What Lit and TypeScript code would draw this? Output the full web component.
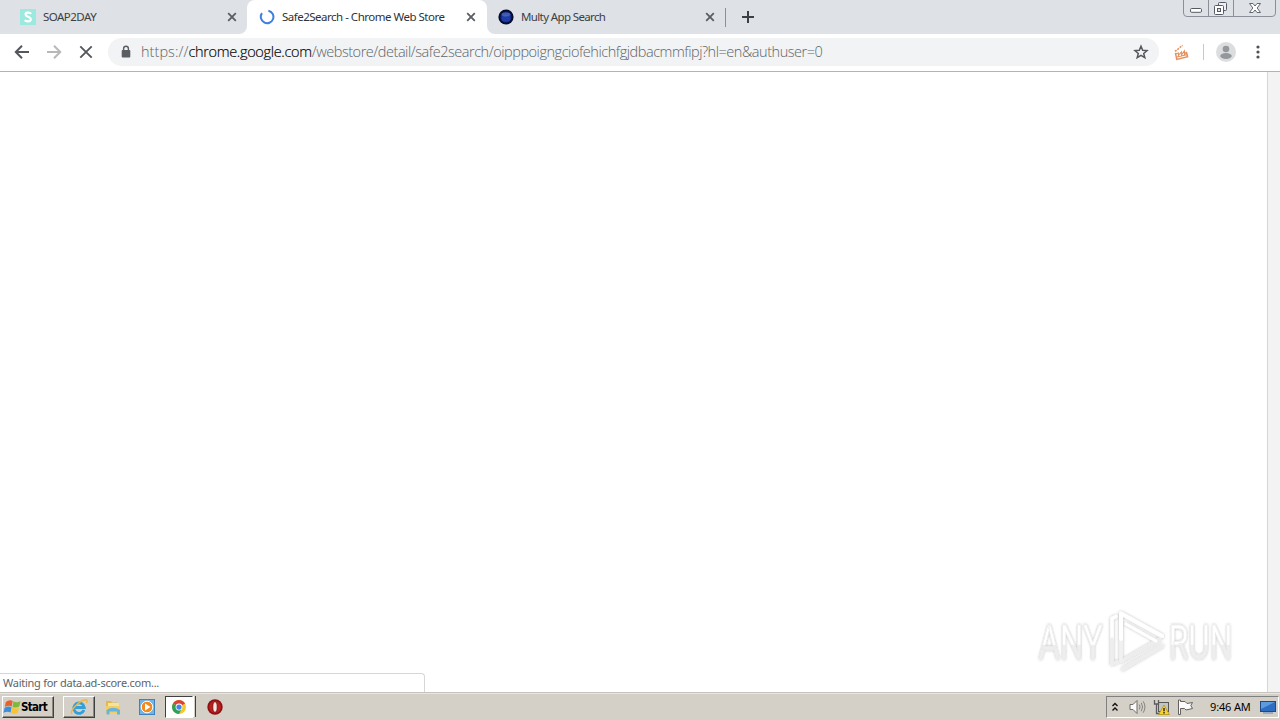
import { LitElement, html, css, svg } from 'lit';
import { customElement } from 'lit/decorators.js';

const closeGlyph = html`<svg class="close" width="10" height="10" viewBox="0 0 10 10">
  <path d="M1.2 1.2 L8.8 8.8 M8.8 1.2 L1.2 8.8" stroke="#5a5d61" stroke-width="1.8" fill="none" />
</svg>`;

@customElement('tab-strip')
class TabStrip extends LitElement {
  static styles = css`
    :host { display: flex; height: 34px; background: #dee1e6; font: 11.5px "Noto Sans", "Open Sans", sans-serif; color: #3c4043; position: relative; }
    .tab { display: flex; align-items: center; box-sizing: border-box; height: 34px; padding-left: 20px; }
    .first { width: 247px; padding-right: 10px; border-bottom-right-radius: 8px; background: #dee1e6; }
    .active { width: 240px; padding-left: 12px; padding-right: 11px; background: #fff; color: #303236; border-radius: 8px 8px 0 0; }
    .top { display: flex; background: linear-gradient(#dee1e6 50%, #fff 50%); }
    .third { width: 239px; padding-left: 11px; padding-right: 11px; background: #dee1e6; border-bottom-left-radius: 8px; }
    .label { flex: 1; white-space: nowrap; margin-left: 7px; line-height: 16px; }
    .soap { letter-spacing: -0.52px; }
    .safe { letter-spacing: -0.5px; }
    .multy { letter-spacing: -0.63px; }
    .icon { flex: none; display: block; }
    .close { flex: none; display: block; }
    .divider { width: 1px; height: 19px; margin: 8px 0 0 -1px; background: #8c9096; }
    .plus { margin: 10px 0 0 15px; }
    .window { position: absolute; right: 3px; top: 0; display: block; }
  `;
  render() {
    return html`
      <div class="top">
      <div class="tab first">
        <svg class="icon" width="16" height="16" viewBox="0 0 16 16">
          <rect width="16" height="16" fill="#9ce9e0" />
          <path d="M11 4.8 C10 3.3 5.5 3 5.5 5.6 C5.5 8.2 10.8 7.2 10.8 10.2 C10.8 13 6 13 4.8 11.2" fill="none" stroke="#fff" stroke-width="2.2" />
        </svg>
        <span class="label soap">SOAP2DAY</span>${closeGlyph}
      </div>
      <div class="tab active">
        <svg class="icon" width="16" height="16" viewBox="0 0 16 16">
          <path d="M9.4 1.7 A6.3 6.3 0 1 1 3 4.2" fill="none" stroke="#3d7fdc" stroke-width="2" />
        </svg>
        <span class="label safe">Safe2Search - Chrome Web Store</span>${closeGlyph}
      </div>
      <div class="tab third">
        <svg class="icon" width="16" height="16" viewBox="0 0 16 16">
          <circle cx="8" cy="8" r="7.6" fill="#060b2c" /><circle cx="8" cy="8" r="5.6" fill="#12267e" /><ellipse cx="8" cy="9.4" rx="4.6" ry="3.4" fill="#1d3ca8" />
          <ellipse cx="8" cy="5.4" rx="4.4" ry="2" fill="#5f7cd0" opacity=".6" />
        </svg>
        <span class="label multy">Multy App Search</span>${closeGlyph}
      </div>
      </div>
      <div class="divider"></div>
      <svg class="plus" width="14" height="14" viewBox="0 0 14 14"><path d="M7 1 V13 M1 7 H13" stroke="#3c4043" stroke-width="2" /></svg>
      <svg class="window" width="94" height="18" viewBox="0 0 94 18">
        <path d="M.5 0 V13 Q.5 16.5 4 16.5 H89 Q92.5 16.5 92.5 13 V0 M25.5 0 V16 M50.5 0 V16" fill="none" stroke="#8b8f98" />
        <rect x="7.5" y="8.5" width="11" height="3.8" rx="1.2" fill="#fff" stroke="#555a66" />
        <rect x="35.5" y="2.5" width="8" height="8" rx="1" fill="#eef0f3" stroke="#555a66" />
        <rect x="31.5" y="5.5" width="9" height="9" rx="1" fill="#fff" stroke="#555a66" />
        <rect x="34.5" y="8.5" width="3" height="3" fill="#dee1e6" stroke="#555a66" />
        <path d="M66.5 3.5 H70 L72 6 L74 3.5 H77.5 L74.2 8 L77.5 12.5 H74 L72 10 L70 12.5 H66.5 L69.8 8 Z" fill="#fff" stroke="#636773" />
      </svg>`;
  }
}

@customElement('address-row')
class AddressRow extends LitElement {
  static styles = css`
    :host { display: flex; align-items: center; box-sizing: border-box; height: 38px; padding: 0 12px 1px; background: #fff; border-bottom: 1px solid #b2b3b4; }
    svg { display: block; flex: none; }
    .nav { display: flex; gap: 12px; width: 96px; }
    .pill { display: flex; align-items: center; box-sizing: border-box; width: 1051px; height: 28px; border-radius: 14px; background: #f1f3f4; padding: 0 10px 0 11px; }
    .url { flex: 1; margin-left: 8px; white-space: nowrap; font: 300 14.5px "Open Sans", "Noto Sans", sans-serif; color: #5f6469; line-height: 20px; }
    .s { letter-spacing: 0.05px; }
    .host { color: #000; letter-spacing: -0.32px; -webkit-text-stroke: 0.15px #000; }
    .path { letter-spacing: -0.46px; }
    .ext { margin-left: 14px; }
    .line { width: 1px; height: 16px; margin-left: 13px; background: #c6c8ca; }
    .user { margin-left: 12px; }
    .dots { margin-left: 20px; }
  `;
  render() {
    return html`
      <div class="nav">
        <svg width="20" height="20" viewBox="0 0 20 20"><path d="M17 10 H4 M10 3.8 L3.8 10 L10 16.2" fill="none" stroke="#54575b" stroke-width="2" /></svg>
        <svg width="20" height="20" viewBox="0 0 20 20"><path d="M3 10 H16 M10 3.8 L16.2 10 L10 16.2" fill="none" stroke="#b6b8ba" stroke-width="2" /></svg>
        <svg width="20" height="20" viewBox="0 0 20 20"><path d="M4.3 4.3 L15.7 15.7 M15.7 4.3 L4.3 15.7" fill="none" stroke="#54575b" stroke-width="1.9" /></svg>
      </div>
      <div class="pill">
        <svg width="14" height="14" viewBox="0 0 14 14"><rect x="2.7" y="5" width="8.6" height="7.6" rx="1" fill="#5a5d61" /><path d="M4.6 5.5 V3.7 a2.4 2.4 0 0 1 4.8 0 V5.5" fill="none" stroke="#5a5d61" stroke-width="1.4" /></svg>
        <span class="url"><span class="s">https://</span><span class="host">chrome.google.com</span><span class="path">/webstore/detail/safe2search/oipppoigngciofehichfgjdbacmmfipj?hl=en&amp;authuser=0</span></span>
        <svg width="16" height="16" viewBox="0 0 16 16"><path d="M8 2.2 L9.7 6.2 L14 6.5 L10.7 9.4 L11.8 13.6 L8 11.3 L4.2 13.6 L5.3 9.4 L2 6.5 L6.3 6.2 Z" fill="none" stroke="#54575b" stroke-width="1.5" /></svg>
      </div>
      <svg class="ext" width="17" height="17" viewBox="0 0 17 17"><g fill="none" stroke="#e5915f"><path d="M2.4 8.8 L3.8 15.4 L14.6 12.8 L13.4 8" stroke-width="1.5" /><path d="M3 9.8 L5.4 9 V11.6 L8.4 8 V10.8 L11.4 6.8 V10 L13.6 8 M4 13 L14 10.6" stroke-width="1.1" /><path d="M2 7.4 L9.6 1.4" stroke-width="1.6" stroke-dasharray="2 1" /></g></svg>
      <div class="line"></div>
      <svg class="user" width="20" height="20" viewBox="0 0 20 20"><circle cx="10" cy="10" r="10" fill="#dcdddf" /><circle cx="10" cy="7" r="3.3" fill="#94979b" /><ellipse cx="10" cy="14" rx="5.8" ry="2.9" fill="#94979b" /></svg>
      <svg class="dots" width="4" height="16" viewBox="0 0 4 16"><g fill="#4e5155"><circle cx="2" cy="3" r="1.6" /><circle cx="2" cy="8" r="1.6" /><circle cx="2" cy="13" r="1.6" /></g></svg>`;
  }
}

@customElement('page-view')
class PageView extends LitElement {
  static styles = css`
    :host { display: flex; position: relative; flex: 1; background: #fff; min-height: 0; }
    .page { flex: 1; }
    .scroll { width: 12px; border-left: 1px solid #d6d6d6; background: #f3f3f3; }
    .status { position: absolute; left: 0; bottom: 0; box-sizing: border-box; width: 425px; height: 19px; padding-left: 3px; border: 1px solid #d6d6d6; border-width: 1px 1px 0 0; border-top-right-radius: 4px; background: #fff; color: #606366; font: 11px/18px "Noto Sans", sans-serif; letter-spacing: -0.26px; white-space: nowrap; }
    .mark { position: absolute; left: 1030px; top: 531px; }
    .word { font: 49px "Roboto", sans-serif; fill: url(#fade); stroke: #e9e9e9; stroke-width: .6; filter: url(#soft); }
  `;
  render() {
    return html`
      <div class="page"></div><div class="scroll"></div>
      <svg class="mark" width="212" height="76" viewBox="0 0 212 76">
        <defs>
          <linearGradient id="fade" x1="0" y1="0" x2="0" y2="1"><stop offset=".54" stop-color="#fff" /><stop offset=".55" stop-color="#eeeeee" /></linearGradient>
          <filter id="soft" x="-10%" y="-10%" width="120%" height="120%"><feDropShadow dx="0" dy="0" stdDeviation="1.5" flood-color="#000" flood-opacity=".3" /></filter>
        </defs>
        <text class="word" transform="translate(8.5 56) scale(.69 1)" textLength="93" lengthAdjust="spacingAndGlyphs">ANY</text>
        <g filter="url(#soft)" fill="none" stroke-linejoin="round" stroke-linecap="round">
          <path d="M93 66 L132 43" stroke="#ededed" stroke-width="3.5" />
          <path d="M86 13.5 L82 15.5 V36" stroke="#fff" stroke-width="3.5" />
          <path d="M82 36 V61 L87 59" stroke="#eeeeee" stroke-width="3.5" />
          <path d="M92 58 L130 36" stroke="#ededed" stroke-width="3.5" />
          <path d="M91 36 V58" stroke="#f1f1f1" stroke-width="3.5" />
          <path d="M91 36 V10.5 L132 33" stroke="#fff" stroke-width="4" />
          <path d="M96 21 L126 38" stroke="#fff" stroke-width="3" />
        </g>
        <text class="word" transform="translate(138.5 56) scale(.69 1)" textLength="93" lengthAdjust="spacingAndGlyphs">RUN</text>
      </svg>
      <div class="status">Waiting for data.ad-score.com...</div>`;
  }
}

const flag = svg`<path d="M0 3 Q4 0 7.5 2 L6.5 8 Q3 6 -1 8.5 Z" fill="#e8602c"/><path d="M8.3 2.3 Q12 4.4 16 2 L14.6 8 Q11 10 7.3 8.4 Z" fill="#7fb93c"/><path d="M-1.2 9.4 Q3 7 6.3 9 L5.2 14.5 Q2 12.5 -2.5 14.8 Z" fill="#3c8ed8"/><path d="M7 9.3 Q11 11 14.4 9 L13 14.8 Q9.5 17 5.8 15 Z" fill="#f7c534"/>`;

@customElement('task-bar')
class TaskBar extends LitElement {
  static styles = css`
    :host { display: flex; align-items: flex-start; box-sizing: border-box; height: 28px; padding: 3px 1px 0 2px; background: #d4d0c8; border-top: 1px solid #c6c3bd; box-shadow: inset 0 1px #e8e6e1; font-family: "DejaVu Sans", sans-serif; color: #000; }
    svg { display: block; flex: none; }
    .raised { box-sizing: border-box; height: 22px; border: 1px solid; border-color: #fff #404040 #404040 #fff; box-shadow: inset -1px -1px #8c8880; display: flex; align-items: center; justify-content: center; background: #d4d0c8; }
    .start { width: 52px; font: bold 11.5px "DejaVu Sans Condensed", "DejaVu Sans", sans-serif; letter-spacing: -0.7px; justify-content: flex-start; }
    .ie { width: 32px; margin-left: 9px; }
    .plain { display: flex; width: 34px; height: 22px; align-items: center; justify-content: center; }
    .folder { margin-left: 1px; }
    .pressed { box-sizing: border-box; width: 28px; height: 22px; margin-left: 1px; display: flex; align-items: center; justify-content: center; border: 1px solid; border-color: #404040 #fff #fff #404040; background: #fff; }
    .stack { box-sizing: border-box; width: 3px; height: 21px; border-right: 1px solid #404040; border-left: 1px solid #fff; margin-right: 2px; }
    .gap { flex: 1; }
    .tray { display: flex; align-items: center; box-sizing: border-box; width: 173px; height: 22px; padding: 0 2px 0 5px; border: 1px solid; border-color: #808080 #fff #fff #808080; }
    .sound { margin-left: 11px; } .net { margin-left: 7px; } .flagicon { margin-left: 7px; }
    .time { flex: 1; margin-left: 16px; font: 11px "Noto Sans", sans-serif; letter-spacing: -0.15px; white-space: nowrap; position: relative; top: -0.5px; }
  `;
  render() {
    return html`
      <div class="raised start">
        <svg width="18" height="18" viewBox="-3 0 19.5 17">${flag}</svg><span>Start</span>
      </div>
      <div class="raised ie">
        <svg width="18" height="18" viewBox="0 0 18 18"><path d="M14 12 A5.3 5.3 0 1 1 14.3 9.5 H5" fill="none" stroke="#359fdc" stroke-width="2.8" /><path d="M2 16 C-.8 13 10 1.8 16 1.8 C17.6 2 17.3 3.6 16.4 5" fill="none" stroke="#edb83d" stroke-width="1.4" /></svg>
      </div>
      <div class="plain folder">
        <svg width="16" height="16" viewBox="0 0 16 16"><path d="M1 2 H6 L7 3.5 H13 V13 H1 Z" fill="#e0bb4c" /><path d="M3 4 H14 V12 H3 Z" fill="#f5e39d" /><path d="M1 7 H15 V14 H1 Z" fill="#efcf66" /><path d="M1.5 15.5 V11 Q8 6.5 15 11 V15.5 H12 V12.5 H4.5 V15.5 Z" fill="#68b4dc" /></svg>
      </div>
      <div class="plain">
        <svg width="16" height="16" viewBox="0 0 16 16"><rect x=".5" y=".5" width="15" height="15" fill="#74b4e4" stroke="#3d83bf" /><circle cx="8" cy="8" r="5.8" fill="#f18a20" stroke="#fff" stroke-width="1" /><path d="M6 4.5 L11.5 8 L6 11.5 Z" fill="#fff" /></svg>
      </div>
      <div class="pressed">
        <svg width="14" height="14" viewBox="0 0 16 16"><circle cx="8" cy="8" r="8" fill="#f3c82e" /><path d="M8 8 L1.1 4 A8 8 0 0 1 14.9 4 Z" fill="#da4437" /><path d="M8 8 L1.1 4 A8 8 0 0 0 8 16 L10.5 11 Z" fill="#2ba15b" /><circle cx="8" cy="8" r="3.9" fill="#fff" /><circle cx="8" cy="8" r="3" fill="#4284ec" /></svg>
      </div>
      <div class="stack"></div>
      <div class="plain">
        <svg width="16" height="16" viewBox="0 0 16 16"><circle cx="8" cy="8" r="7.7" fill="#8e1010" /><circle cx="8" cy="8" r="6" fill="#b91f1f" /><ellipse cx="8" cy="8" rx="2.2" ry="5.3" fill="#f5e8e4" stroke="#7c0707" stroke-width=".8" /></svg>
      </div>
      <div class="gap"></div>
      <div class="tray">
        <svg width="6" height="10" viewBox="0 0 6 10"><path d="M.5 4 L3 1.5 L5.5 4 M.5 8.5 L3 6 L5.5 8.5" fill="none" stroke="#111" stroke-width="1.4" /></svg>
        <svg class="sound" width="17" height="16" viewBox="0 0 17 16"><path d="M1 5.5 H4 L8 1.5 V14.5 L4 10.5 H1 Z" fill="#fafafa" stroke="#6e6d6a" /><path d="M10.3 5.5 Q11.8 8 10.3 10.5 M12.3 3.8 Q14.8 8 12.3 12.2 M14.2 2.3 Q17.7 8 14.2 13.7" fill="none" stroke="#84827e" /></svg>
        <svg class="net" width="17" height="16" viewBox="0 0 17 16"><rect x="5.5" y="3.5" width="10" height="9" fill="#c3c5c5" stroke="#565656" /><path d="M1.5 1 V5 H5.5 V1 M3.5 5 V14.5 H8" fill="none" stroke="#5c5c5c" stroke-width="1.3" /><path d="M11 6 L16.4 15.5 H5.6 Z" fill="#f8d42e" stroke="#ad8b08" stroke-width=".7" /><path d="M11 9 V12.2 M11 13 V14.4" stroke="#222" stroke-width="1.4" /></svg>
        <svg class="flagicon" width="17" height="16" viewBox="0 0 17 16"><path d="M1.5 1 V15.5 H3.5 V9.5 H7.5 L9 11 L15.5 9.5 L13.8 6.5 L15.5 3.5 L10 4.5 L8 2.5 H3.5 V1 Z" fill="#fbfbfb" stroke="#62615e" /></svg>
        <span class="time">9:46 AM</span>
        <svg width="16" height="14" viewBox="0 0 16 14"><rect x=".5" y="1.5" width="15" height="10" fill="#2e6dc0" stroke="#20497f" /><path d="M1 2 H15 L1 9 Z" fill="#5d9be0" /><path d="M3 13 H13" stroke="#5e86b5" /></svg>
      </div>`;
  }
}

@customElement('app-root')
class AppRoot extends LitElement {
  static styles = css`
    :host { display: flex; flex-direction: column; width: 1280px; height: 720px; overflow: hidden; background: #fff; }
    tab-strip, address-row, task-bar { flex: none; }
  `;
  render() {
    return html`<tab-strip></tab-strip><address-row></address-row><page-view></page-view><task-bar></task-bar>`;
  }
}
